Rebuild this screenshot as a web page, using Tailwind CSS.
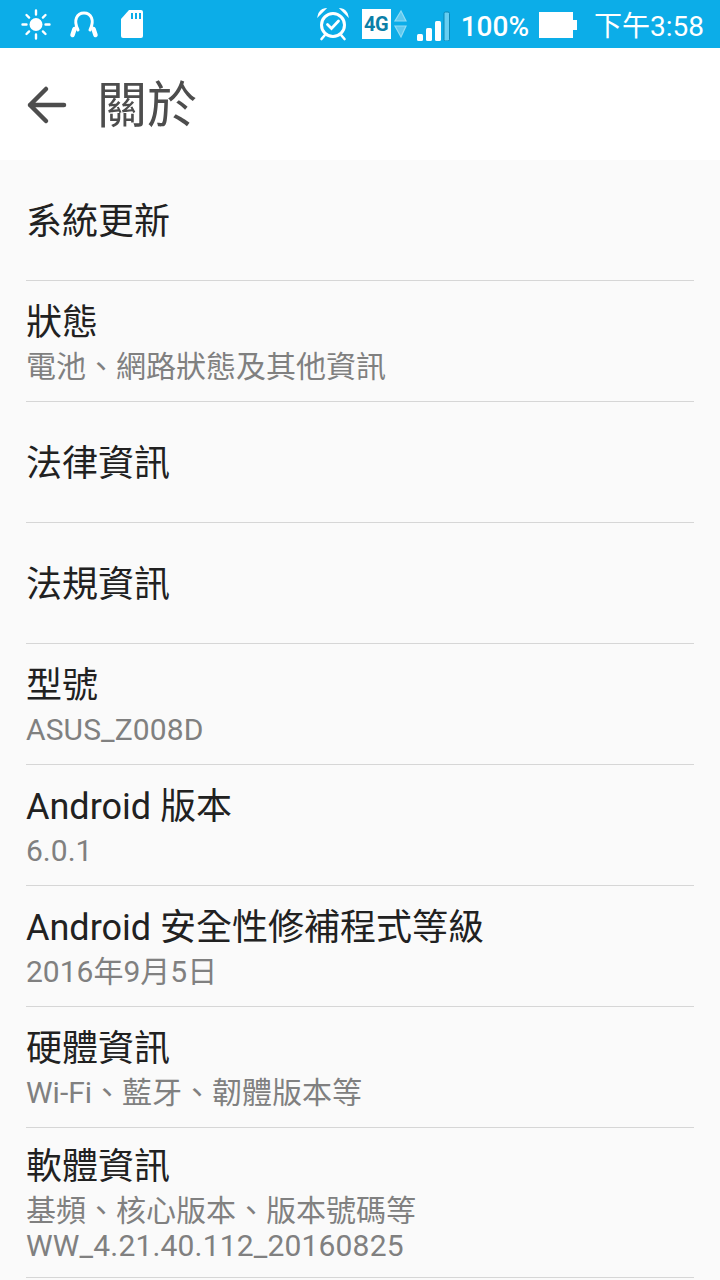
<!DOCTYPE html>
<html lang="zh-TW">
<head>
    <meta charset="UTF-8">
    <meta name="viewport" content="width=device-width, initial-scale=1.0">
    <title>關於</title>
    <script src="https://cdn.jsdelivr.net/npm/@tailwindcss/browser@4"></script>
</head>
<body class="w-[720px] h-[1280px] overflow-hidden bg-[#fafafa] font-['Roboto','Noto_Sans_CJK_TC',sans-serif]">
    <!-- status bar -->
    <div class="h-12 bg-[#0cade8] flex items-center text-white">
        <div class="flex items-center pl-[20px]">
            <svg class="w-[32px] h-[32px]" viewBox="0 0 32 32" fill="none" stroke="#fff" stroke-width="2.4" stroke-linecap="round">
                <circle cx="16" cy="16.500" r="6.500" fill="#fff" stroke="none"/>
                <path d="M16 2.500v4M16 26.500v4M2.500 16.500h4M25.500 16.500h4M6.500 7l2.600 2.600M22.900 23.400l2.600 2.600M6.500 26l2.600-2.600M22.900 9.600L25.500 7"/>
            </svg>
            <svg class="w-[32px] h-[32px] ml-[16px]" viewBox="0 0 32 32" fill="none" stroke="#fff" stroke-linecap="round">
                <path d="M10 22C5 12 9 5 16 5S27 12 22 22" stroke-width="3"/>
                <path d="M6.500 21L4.500 27M25.500 21L27.500 27" stroke-width="4.500"/>
            </svg>
            <svg class="w-[24px] h-[30px] ml-[20px]" viewBox="0 0 24 30">
                <path d="M9 1h12a2 2 0 0 1 2 2v24a2 2 0 0 1-2 2H3a2 2 0 0 1-2-2V10z" fill="#fff"/>
                <path d="M11 4h2v6h-2zM15 4h2v6h-2zM19 4h2v6h-2z" fill="#0cade8"/>
            </svg>
        </div>
        <div class="ml-auto flex items-center pr-[16px]">
            <svg class="w-[36px] h-[36px]" viewBox="0 0 36 36" fill="none" stroke="#fff" stroke-linecap="round">
                <circle cx="18" cy="19" r="11.500" stroke-width="3"/>
                <path d="M12.500 18.500l4 4 7-7.500" stroke-width="2.800"/>
                <path d="M3.500 9.500C4.500 5.500 7 3.500 10 3zM32.500 9.500C31.500 5.500 29 3.500 26 3z" fill="#fff" stroke="#fff" stroke-width="1.500"/>
                <path d="M9.500 29.500l-3 3.500M26.500 29.500l3 3.500" stroke-width="2.600"/>
            </svg>
            <div class="ml-[11px] w-[29px] h-[30px] bg-white flex items-center justify-center text-[#0b7fa8] text-[20px] font-bold leading-none tracking-[-0.5px]">4G</div>
            <svg class="w-[14px] h-[30px] ml-[2px]" viewBox="0 0 14 30">
                <path d="M8 2l5 10H2z" fill="#5fc9ef" stroke="#8fdcf5" stroke-width="1.200"/>
                <path d="M2 17h11L8 28z" fill="#5fc9ef" stroke="#8fdcf5" stroke-width="1.200"/>
            </svg>
            <svg class="w-[34px] h-[34px] ml-[9px]" viewBox="0 0 34 34">
                <rect x="1" y="27" width="6" height="7" rx="1.500" fill="#fff"/>
                <rect x="10" y="21" width="6" height="13" rx="1.500" fill="#fff"/>
                <rect x="19" y="14" width="6" height="20" rx="1.500" fill="#fff"/>
                <rect x="28" y="5" width="5.500" height="29" rx="1.500" fill="#66cef2" stroke="#0b87b5" stroke-width="1"/>
            </svg>
            <span class="ml-[11px] mt-[5px] text-[28px] font-medium leading-none">100%</span>
            <svg class="w-[38px] h-[26px] ml-[10px] mt-[2px]" viewBox="0 0 38 26">
                <path d="M0 0h34v8h4v10h-4v8H0z" fill="#fff"/>
            </svg>
            <span class="ml-[17px] mt-[5px] text-[28px] leading-none">下午3:58</span>
        </div>
    </div>

    <!-- app bar -->
    <div class="h-[112px] bg-white flex items-center">
        <svg class="ml-[26px] mt-[1px] w-[42px] h-[42px]" viewBox="0 0 42 42" fill="none" stroke="#4d4d4d" stroke-width="4.500" stroke-linecap="round" stroke-linejoin="round">
            <path d="M4 21h34M20 5L4 21l16 16"/>
        </svg>
        <h1 class="ml-[29px] mt-[4px] text-[50px] leading-none text-[#4d4d4d]">關於</h1>
    </div>

    <!-- list -->
    <div class="mx-[26px]">
        <div class="h-[116px] pt-[4px] border-b border-[#d6d6d6] box-content flex flex-col justify-center">
            <div class="text-[36px] leading-[44px] text-[#212121]">系統更新</div>
        </div>
        <div class="h-[116px] pt-[4px] border-b border-[#d6d6d6] box-content flex flex-col justify-center">
            <div class="text-[36px] leading-[44px] text-[#212121]">狀態</div>
            <div class="mt-[4px] text-[30px] leading-[36px] text-[#808080]">電池、網路狀態及其他資訊</div>
        </div>
        <div class="h-[116px] pt-[4px] border-b border-[#d6d6d6] box-content flex flex-col justify-center">
            <div class="text-[36px] leading-[44px] text-[#212121]">法律資訊</div>
        </div>
        <div class="h-[116px] pt-[4px] border-b border-[#d6d6d6] box-content flex flex-col justify-center">
            <div class="text-[36px] leading-[44px] text-[#212121]">法規資訊</div>
        </div>
        <div class="h-[116px] pt-[4px] border-b border-[#d6d6d6] box-content flex flex-col justify-center">
            <div class="text-[36px] leading-[44px] text-[#212121]">型號</div>
            <div class="mt-[4px] text-[30px] leading-[36px] tracking-[0.1px] text-[#808080]">ASUS_Z008D</div>
        </div>
        <div class="h-[116px] pt-[4px] border-b border-[#d6d6d6] box-content flex flex-col justify-center">
            <div class="text-[36px] leading-[44px] text-[#212121]">Android 版本</div>
            <div class="mt-[4px] text-[30px] leading-[36px] text-[#808080]">6.0.1</div>
        </div>
        <div class="h-[116px] pt-[4px] border-b border-[#d6d6d6] box-content flex flex-col justify-center">
            <div class="text-[36px] leading-[44px] text-[#212121]">Android 安全性修補程式等級</div>
            <div class="mt-[4px] text-[30px] leading-[36px] text-[#808080]">2016年9月5日</div>
        </div>
        <div class="h-[116px] pt-[4px] border-b border-[#d6d6d6] box-content flex flex-col justify-center">
            <div class="text-[36px] leading-[44px] text-[#212121]">硬體資訊</div>
            <div class="mt-[4px] text-[30px] leading-[36px] text-[#808080]">Wi-Fi、藍牙、韌體版本等</div>
        </div>
        <div class="h-[132px] pt-[17px] border-b border-[#d6d6d6] box-content flex flex-col">
            <div class="text-[36px] leading-[44px] text-[#212121]">軟體資訊</div>
            <div class="mt-[4px] text-[30px] leading-[36px] text-[#808080]">基頻、核心版本、版本號碼等</div>
            <div class="-mt-[1px] text-[30px] leading-[36px] tracking-[0.17px] text-[#808080]">WW_4.21.40.112_20160825</div>
        </div>
    </div>
</body>
</html>
